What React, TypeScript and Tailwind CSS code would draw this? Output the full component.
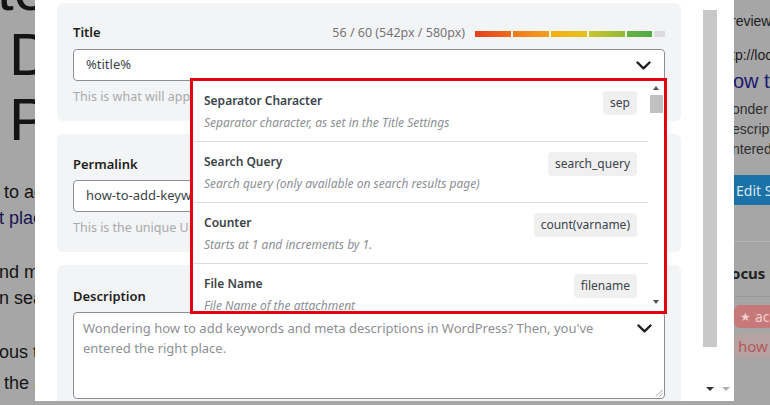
import React from 'react';

const tags = [
  { title: 'Separator Character', desc: 'Separator character, as set in the Title Settings', tag: 'sep' },
  { title: 'Search Query', desc: 'Search query (only available on search results page)', tag: 'search_query' },
  { title: 'Counter', desc: 'Starts at 1 and increments by 1.', tag: 'count(varname)' },
  { title: 'File Name', desc: 'File Name of the attachment', tag: 'filename' },
];

const segments = [
  'from-[#e3401d] to-[#ef6a1b]',
  'from-[#f2771a] to-[#f3a01a]',
  'from-[#f2b010] to-[#e4c21c]',
  'from-[#c8c52a] to-[#93b937]',
  'from-[#68b242] to-[#4fab46]',
];

const Chevron = () => (
  <svg width="15" height="9" viewBox="0 0 15 9" fill="none" stroke="#1e1e1e" strokeWidth="2.4" strokeLinecap="round" strokeLinejoin="round">
    <polyline points="1.5,1.5 7.5,7.3 13.5,1.5" />
  </svg>
);

const Card = ({ children, className = '' }: { children: React.ReactNode; className?: string }) => (
  <div className={`bg-[#f3f4f5] rounded-md px-4 pt-5 pb-[14px] ${className}`}>{children}</div>
);

const LeftStrip = () => (
  <div className="w-[35px] shrink-0 overflow-hidden text-[#141414] font-['Liberation_Sans',sans-serif] whitespace-nowrap">
    <div className="text-[60px] leading-[65px] -mt-[43px] -ml-[3px]">te</div>
    <div className="text-[60px] leading-[65px] pl-[9px]">D</div>
    <div className="text-[60px] leading-[65px] pl-[9px]">P</div>
    <div className="text-[18px] leading-[26px] mt-[27px] -ml-[1px]">
      <div>&nbsp;to add</div>
      <div className="text-[#151550]">t place</div>
      <div className="mt-[28px]">nd m</div>
      <div>n sear</div>
      <div className="mt-[28px]">ous t</div>
      <div className="mt-[5px]">&nbsp;the <span className="text-[#b8862a]">a</span></div>
    </div>
  </div>
);

const RightStrip = () => (
  <div className="flex-1 overflow-hidden whitespace-nowrap text-[14px] text-[#1c1c1c] font-['Liberation_Sans',sans-serif]">
    <div className="mt-[11px] -ml-[3px] leading-5">review</div>
    <div className="mt-[14px] -ml-[3px] leading-5">tp://loc</div>
    <div className="mt-[2px] -ml-[1px] text-[20px] leading-7 text-[#1a1670]">ow to</div>
    <div className="mt-[4px] -ml-[2px] leading-5 text-[#2e2e2e]">onder</div>
    <div className="-ml-[2px] leading-5 text-[#2e2e2e]">escript</div>
    <div className="-ml-[2px] leading-5 text-[#2e2e2e]">ntered</div>
    <div className="mt-[16px] h-[30px] bg-[#1b72a8] text-[#d8e6ef] flex items-center pl-[2px] font-['Noto_Sans',sans-serif] text-[14px]">Edit S</div>
    <div className="mt-[36px] border-t border-[#b4b4b4]" />
    <div className="mt-[21px] font-bold text-[15px] leading-5 -ml-[3px] font-['Noto_Sans',sans-serif] text-[#222]">ocus K</div>
    <div className="mt-[13px] border-t border-[#9a9a9a]" />
    <div className="mt-[8px] h-[23px] w-[60px] bg-[#c77878] rounded-l-[6px] flex items-center pl-[6px] gap-1 text-[#f0d0d0] font-['Noto_Sans',sans-serif] text-[14px]">
      <span className="text-[12px]">★</span>
      <span>ac</span>
    </div>
    <div className="mt-[6px] h-[24px] w-[60px] bg-[#b7a2a2] rounded-l-[6px] flex items-center pl-[4px] text-[#b35858] font-['Noto_Sans',sans-serif] text-[15px]">how</div>
  </div>
);

export default function App() {
  return (
    <div className="w-[770px] h-[405px] bg-[#a6a6a6] flex overflow-hidden font-['Noto_Sans',sans-serif]">
      <LeftStrip />
      <div className="w-[699px] h-[401px] bg-white flex shrink-0">
        <div className="w-[668px] px-[22px] pt-[3px] flex flex-col gap-[13px] overflow-hidden">
          <Card>
            <div className="flex items-center h-5 mb-1.5">
              <div className="text-[13px] font-semibold text-[#1e1e1e]">Title</div>
              <div className="ml-auto text-[12.5px] text-[#757575]">56 / 60 (542px / 580px)</div>
              <div className="ml-[10px] w-[190px] h-[6px] flex gap-[2px] mt-[1px]">
                {segments.map((s, i) => (
                  <div key={i} className={`h-full ${i === 4 ? 'w-[25px]' : 'w-[36px]'} bg-gradient-to-r ${s}`} />
                ))}
                <div className="flex-1 h-full bg-[#dcdcde]" />
              </div>
            </div>
            <div className="relative">
              <div className="h-8 border border-[#8c8f94] rounded bg-white flex items-center pl-3 pr-[13px] text-[13px] text-[#3c434a]">
                <span>%title%</span>
                <span className="ml-auto"><Chevron /></span>
              </div>
              <div className="absolute left-[117px] top-[29px] w-[477px] h-[236px] border-[3px] border-[#e3000f] bg-white z-10 flex">
                <div className="flex-1 overflow-hidden">
                  {tags.map((t) => (
                    <div key={t.tag} className="border-b border-[#dcdcde] pl-[11px] pr-[11px] pt-2.5 pb-2 flex">
                      <div className="flex-1">
                        <div className="text-[12px] font-semibold leading-5 text-[#3c434a]">{t.title}</div>
                        <div className="mt-0.5 text-[12px] italic leading-5 text-[#8c8f94]">{t.desc}</div>
                      </div>
                      <div className="self-start bg-[#f0f0f1] rounded h-6 px-[7px] flex items-center text-[12px] text-[#3c434a]">{t.tag}</div>
                    </div>
                  ))}
                </div>
                <div className="w-[16px] flex flex-col items-center">
                  <div className="mt-[5px] w-0 h-0 border-x-[3.5px] border-x-transparent border-b-[4px] border-b-[#555]" />
                  <div className="mt-[5px] w-[13px] h-[18px] bg-[#c1c1c1]" />
                  <div className="mt-auto mb-[7px] w-0 h-0 border-x-[3.5px] border-x-transparent border-t-[4px] border-t-[#555]" />
                </div>
              </div>
            </div>
            <div className="mt-1.5 leading-5 text-[12.5px] text-[#a7aaad]">This is what will appear as the title in search results.</div>
          </Card>
          <Card>
            <div className="h-5 mb-1.5 text-[13px] font-semibold text-[#1e1e1e] leading-5">Permalink</div>
            <div className="h-8 border border-[#8c8f94] rounded bg-white flex items-center pl-3 text-[13px] text-[#3c434a]">how-to-add-keywords-and-meta-descriptions-in-wordpress</div>
            <div className="mt-1.5 leading-5 text-[12.5px] text-[#a7aaad]">This is the unique URL of this page, displayed below the post title in the search results.</div>
          </Card>
          <Card className="!pt-[21px] flex-1">
            <div className="h-5 mb-1.5 text-[13px] font-semibold text-[#1e1e1e] leading-5">Description</div>
            <div className="relative h-[87px] border border-[#8c8f94] rounded bg-white pl-[9px] pt-[5px] pr-10 text-[13px] leading-5 text-[#8c8f94]">
              Wondering how to add keywords and meta descriptions in WordPress? Then, you've entered the right place.
              <span className="absolute right-[12px] top-[11px]"><Chevron /></span>
              <svg className="absolute right-[1px] bottom-[1px]" width="8" height="8" viewBox="0 0 8 8" stroke="#9a9a9a" strokeWidth="1">
                <line x1="7.5" y1="1" x2="1" y2="7.5" />
                <line x1="7.5" y1="4.5" x2="4.5" y2="7.5" />
              </svg>
            </div>
          </Card>
        </div>
        <div className="w-[14px] flex flex-col items-center">
          <div className="mt-[10px] w-[14px] h-[337px] bg-[#c8c8c8]" />
          <div className="mt-auto mb-[10px] w-0 h-0 border-x-[4px] border-x-transparent border-t-[4px] border-t-[#333]" />
        </div>
        <div className="flex-1 flex flex-col items-center">
          <div className="mt-auto mb-[10px] w-0 h-0 border-x-[4px] border-x-transparent border-t-[4px] border-t-[#b0b0b0]" />
        </div>
      </div>
      <RightStrip />
    </div>
  );
}
